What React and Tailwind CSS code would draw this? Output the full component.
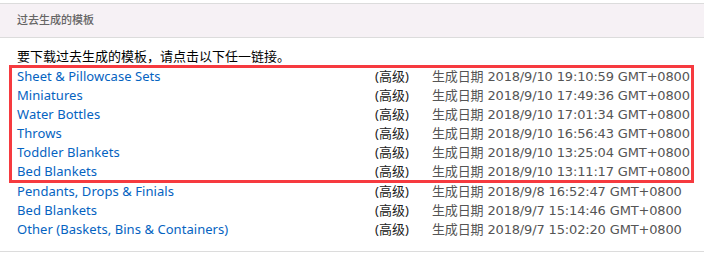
import React from 'react';

const boxed = [
    { name: 'Sheet & Pillowcase Sets', date: '2018/9/10 19:10:59 GMT+0800' },
    { name: 'Miniatures', date: '2018/9/10 17:49:36 GMT+0800' },
    { name: 'Water Bottles', date: '2018/9/10 17:01:34 GMT+0800' },
    { name: 'Throws', date: '2018/9/10 16:56:43 GMT+0800' },
    { name: 'Toddler Blankets', date: '2018/9/10 13:25:04 GMT+0800' },
    { name: 'Bed Blankets', date: '2018/9/10 13:11:17 GMT+0800' },
];

const rest = [
    { name: 'Pendants, Drops & Finials', date: '2018/9/8 16:52:47 GMT+0800' },
    { name: 'Bed Blankets', date: '2018/9/7 15:14:46 GMT+0800' },
    { name: 'Other (Baskets, Bins & Containers)', date: '2018/9/7 15:02:20 GMT+0800' },
];

const Row = ({ item }) => (
    <div className="grid grid-cols-[358px_57px_1fr] h-[19px] leading-[17px] items-start whitespace-nowrap">
        <a href="#" className="text-[#0563c1] tracking-[0.05px]">{item.name}</a>
        <span className="text-[#222]">(高级)</span>
        <span className="text-[#555] font-['DejaVu_Sans','Noto_Sans_CJK_SC',sans-serif] tracking-[-0.15px]">生成日期 {item.date}</span>
    </div>
);

const App = () => {
    return (
        <div className="w-[704px] h-[260px] bg-white pt-[3px] text-[13px] font-['Noto_Sans','Noto_Sans_CJK_SC',sans-serif]">
            <div className="border-t border-b border-[#dcdcdc] bg-[#f6f1f5] h-[35px] flex items-center pl-[17px]">
                <h3 className="text-[11px] text-[#666] font-medium">过去生成的模板</h3>
            </div>
            <div className="pt-[10px] pb-[11px] border-b border-[#dcdcdc]">
                <p className="pl-[17px] h-[17px] leading-[17px] text-[13px] text-black">要下载过去生成的模板，请点击以下任一链接。</p>
                {/* highlight box is 2px shorter than its rows, they run under the bottom border */}
                <div className="ml-[9px] w-[685px] h-[118px] border-[3px] border-[#f63a3f] pl-[5px]">
                    {boxed.map((item, i) => <Row key={i} item={item} />)}
                </div>
                <div className="pl-[17px]">
                    {rest.map((item, i) => <Row key={i} item={item} />)}
                </div>
            </div>
        </div>
    );
};

export default App;
